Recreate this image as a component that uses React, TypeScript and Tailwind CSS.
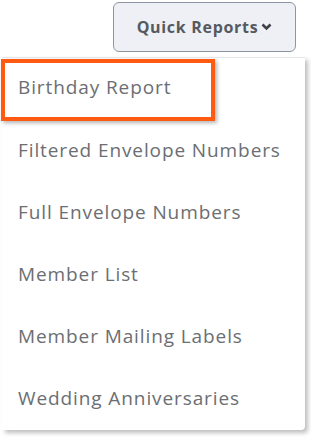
import React from "react"

const items = [
  "Filtered Envelope Numbers",
  "Full Envelope Numbers",
  "Member List",
  "Member Mailing Labels",
  "Wedding Anniversaries",
]

function Chevron() {
  return (
    <svg width="11" height="8" viewBox="0 0 11 8" className="ml-[3px]">
      <path d="M1.5 1.5 L5.5 5.5 L9.5 1.5" fill="none" stroke="#3f3f46" strokeWidth="2.6" />
    </svg>
  )
}

export default function App() {
  return (
    <div className="w-[311px] h-[437px] bg-white overflow-hidden font-['Open_Sans',sans-serif]">
      <div className="flex justify-end pr-[15px] pt-[2px]">
        <button className="flex items-center justify-center w-[183px] h-[50px] rounded-[6px] border border-[#8e95a2] bg-[#eef0f5] text-[16px] font-bold tracking-[0.7px] text-[#555a60]">
          Quick Reports
          <Chevron />
        </button>
      </div>
      <div className="mt-[5px] ml-[2px] w-[303px] h-[373px] bg-white border-t border-[#e5e7eb] rounded-br-[4px] shadow-[3px_3px_4px_rgba(0,0,0,0.25)]">
        <div className="pt-[1px]">
          <div className="-ml-px w-[214px] h-[62px] flex items-center pl-[13px] pb-[5px] border-4 border-[#ff5a12] shadow-[2px_2px_4px_rgba(0,0,0,0.3)] text-[19px] tracking-[0.9px] text-[#6b6e72]">
            Birthday Report
          </div>
          {items.map((label) => (
            <div key={label} className="h-[62px] flex items-center pl-[16px] pb-[4px] text-[19px] tracking-[0.9px] text-[#6b6e72]">
              {label}
            </div>
          ))}
        </div>
      </div>
    </div>
  )
}
